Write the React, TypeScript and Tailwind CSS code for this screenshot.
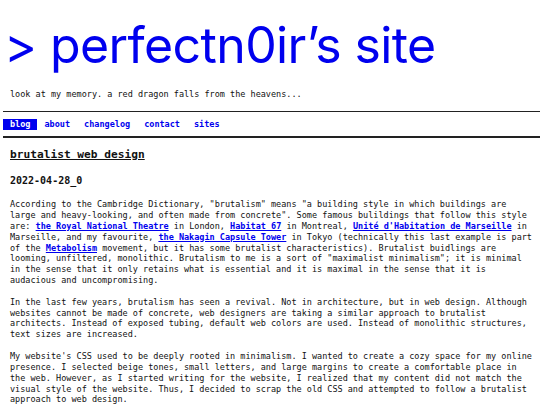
import React from "react";

const navItems = ["blog", "about", "changelog", "contact", "sites"];

function A({ children }: { children: React.ReactNode }) {
  return (
    <a href="#" className="font-bold text-[#0000ee] underline">
      {children}
    </a>
  );
}

export default function App() {
  return (
    <div className="min-h-screen bg-white font-['DejaVu_Sans_Mono',monospace] text-[8.5px] leading-[10.9px] text-[#111]">
      <header className="pl-[4px] pt-[16px]">
        <h1 className="font-['Inter',sans-serif] text-[50px] leading-[58px] tracking-[-0.6px] text-[#0000ee]">
          &gt; perfectn0ir’s site
        </h1>
      </header>

      <p className="mt-[15px] px-[10px]">
        look at my memory. a red dragon falls from the heavens...
      </p>

      <div className="ml-[3px] mt-[11px] h-[1.5px] bg-[#222]" />

      <nav className="ml-[3px] mt-[7px] flex font-bold leading-[11px]">
        {navItems.map((item, i) => (
          <a
            key={item}
            href="#"
            className={
              i === 0
                ? "bg-[#0000ee] px-[7px] text-white"
                : "px-[7px] text-[#0000ee]"
            }
          >
            {item}
          </a>
        ))}
      </nav>

      <div className="ml-[3px] mt-[6px] h-[1.5px] bg-[#222]" />

      <main className="pl-[10px] pr-[2px] pt-[10px]">
        <h2 className="text-[11.2px] font-bold leading-[14px] underline">
          brutalist web design
        </h2>

        <h3 className="mt-[12px] text-[10px] font-bold leading-[13px]">
          2022-04-28_0
        </h3>

        <div className="max-w-[102.5ch]">
          <p className="mt-[12px]">
            According to the Cambridge Dictionary, "brutalism" means "a building
            style in which buildings are large and heavy-looking, and often made
            from concrete". Some famous bulildings that follow this style are:{" "}
            <A>the Royal National Theatre</A> in London, <A>Habitat 67</A> in
            Montreal, <A>Unité d'Habitation de Marseille</A> in Marseille, and my
            favourite, <A>the Nakagin Capsule Tower</A> in Tokyo (technically
            this last example is part of the <A>Metabolism</A> movement, but it
            has some brutalist characteristics). Brutalist buidlings are
            looming, unfiltered, monolithic. Brutalism to me is a sort of
            "maximalist minimalism"; it is minimal in the sense that it only
            retains what is essential and it is maximal in the sense that it is
            audacious and uncompromising.
          </p>

          <p className="mt-[10.5px]">
            In the last few years, brutalism has seen a revival. Not in
            architecture, but in web design. Although websites cannot be made of
            concrete, web designers are taking a similar approach to brutalist
            architects. Instead of exposed tubing, default web colors are used.
            Instead of monolithic structures, text sizes are increased.
          </p>

          <p className="mt-[10.5px]">
            My website's CSS used to be deeply rooted in minimalism. I wanted to
            create a cozy space for my online presence. I selected beige tones,
            small letters, and large margins to create a comfortable place in
            the web. However, as I started writing for the website, I realized
            that my content did not match the visual style of the website. Thus,
            I decided to scrap the old CSS and attempted to follow a brutalist
            approach to web design.
          </p>
        </div>
      </main>
    </div>
  );
}
